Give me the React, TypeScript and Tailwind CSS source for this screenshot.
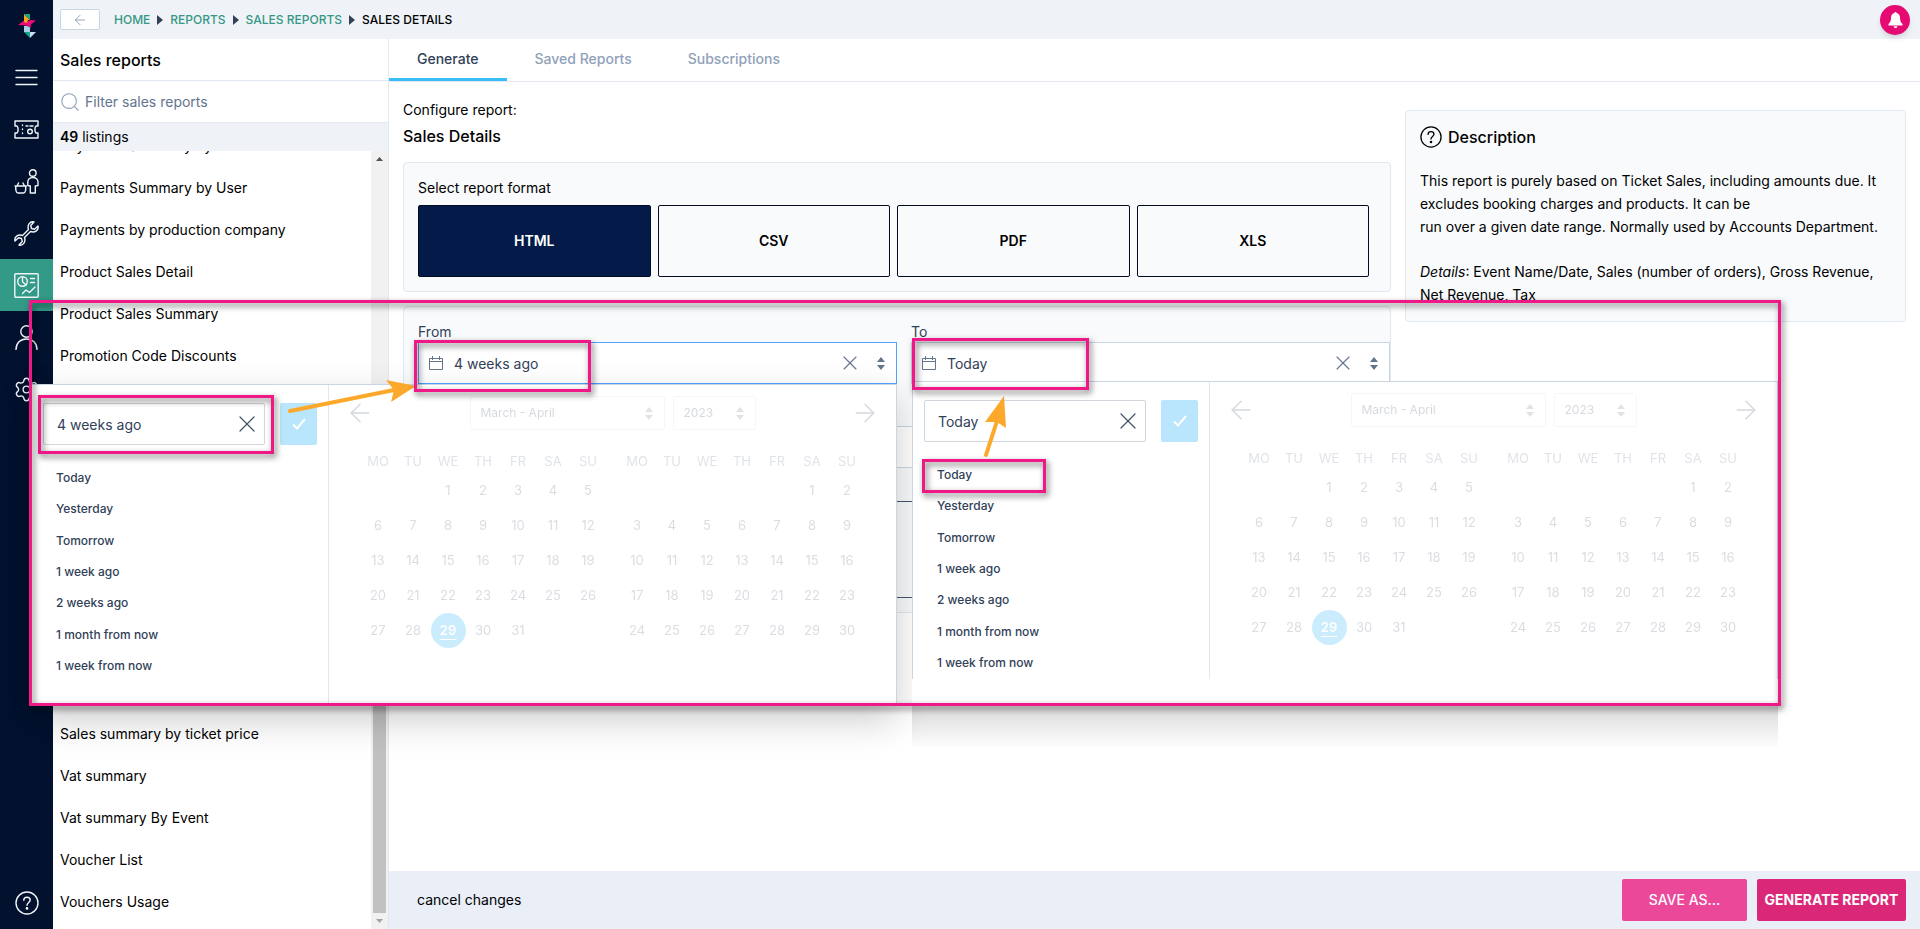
import React, { useState } from 'react';
import { ArrowLeft, ArrowRight, Search, Settings, X } from 'lucide-react';

const topReports = [
  'Payments Summary by Date',
  'Payments Summary by User',
  'Payments by production company',
  'Product Sales Detail',
  'Product Sales Summary',
  'Promotion Code Discounts',
];

const bottomReports = [
  'Sales summary by ticket price',
  'Vat summary',
  'Vat summary By Event',
  'Voucher List',
  'Vouchers Usage',
];

const formats = ['HTML', 'CSV', 'PDF', 'XLS'];
const presets = ['Today', 'Yesterday', 'Tomorrow', '1 week ago', '2 weeks ago', '1 month from now', '1 week from now'];
const weekDays = ['MO', 'TU', 'WE', 'TH', 'FR', 'SA', 'SU'];

// Splits a month into weeks, padding the first one with empty cells
const buildWeeks = (offset: number, length: number) => {
  const cells: (number | null)[] = [
    ...Array(offset).fill(null),
    ...Array.from({ length }, (_, i) => i + 1),
  ];
  while (cells.length % 7) cells.push(null);
  return Array.from({ length: cells.length / 7 }, (_, i) => cells.slice(i * 7, i * 7 + 7));
};

const Logo = () => (
  <svg width="18" height="24" viewBox="0 0 18 24" aria-hidden="true">
    <path d="M6 0v6h6z" fill="#f9a51a" />
    <path d="M6 0h6v6z" fill="#1aa58a" />
    <path d="M12 6l6 .5-5 4-.5 3.500-4.500-2.500-8-.5 6-4.500 3 1.500z" fill="#ec0a7b" />
    <path d="M6 6h4l-1 3-3-1z" fill="#f9a51a" />
    <path d="M6 12l3 0 3 1.500v4.500H6z" fill="#a9cfe6" />
    <path d="M6 18h6v6z" fill="#1aa58a" />
    <path d="M12 18h6l-6 6z" fill="#c4dfee" />
  </svg>
);

const RailIcon: React.FC<{ children: React.ReactNode }> = ({ children }) => (
  <svg width="25" height="25" viewBox="0 0 25 25" fill="none" stroke="currentColor" strokeWidth="1.4" strokeLinejoin="round" strokeLinecap="round" aria-hidden="true">
    {children}
  </svg>
);

const HelpIcon: React.FC<{ size: number }> = ({ size }) => (
  <svg width={size} height={size} viewBox="0 0 24 24" fill="none" stroke="currentColor" strokeWidth="1.4" strokeLinecap="round" aria-hidden="true">
    <circle cx="12" cy="12" r="11" />
    <path d="M8.800 9.200C8.800 7.300 10.200 6.200 12 6.200s3.200 1.100 3.200 2.900c0 2.200-3.200 2.600-3.200 5.200" />
    <circle cx="12" cy="17.400" r=".7" fill="currentColor" />
  </svg>
);

const CalendarIcon = () => (
  <svg width="14" height="14" viewBox="0 0 14 14" fill="none" stroke="#64748b" aria-hidden="true">
    <path d="M.5 2.500h13v11H.5zM.5 5.500h13M3.500 0v4M10.500 0v4" />
  </svg>
);

const SortIcon = () => (
  <svg width="8" height="13" viewBox="0 0 8 13" fill="#64748b" aria-hidden="true">
    <path d="M4 0l4 5H0zM4 13l4-5H0z" />
  </svg>
);

const Separator = () => (
  <svg width="6" height="10" viewBox="0 0 6 10" aria-hidden="true">
    <path d="M0 0l6 5-6 5z" fill="#334155" />
  </svg>
);

const navItems = [
  {
    label: 'Menu',
    icon: <path d="M2 5.500h21M2 12.500h21M2 19.500h21" />,
  },
  {
    label: 'Tickets',
    icon: (
      <>
        <path d="M1 4h23v5h-2c-1.500 1.500-1.500 5.500 0 7h2v5H1v-5h2c1.500-1.500 1.500-5.500 0-7H1z" />
        <path d="M8.500 8v.5M8.500 12v.5M8.500 16v.5M12 9h2M16 9h3" />
        <circle cx="16" cy="14.500" r="2.300" />
      </>
    ),
  },
  {
    label: 'Box office',
    icon: (
      <>
        <circle cx="18.800" cy="4" r="3.300" />
        <path d="M16.300 24v-7l-2.500-.5v-3.500c0-2.500 2-4.500 5-4.500s5.200 2 5.200 4.500v3.500l-2.700.5v7z" />
        <path d="M1 17h11.500M2 17c-.8 3 0 7 2 7h5.500c2 0 2.800-4 2-7M4.500 14L3 17M9 14l1.500 3" />
      </>
    ),
  },
  {
    label: 'Setup',
    icon: <path d="M24 5L20.500 8.300 17.500 7.500 16.700 4.500 20 1C16 0 13 4 14.500 8.500L8.500 14.500C4 13 0 16 1 20L4.500 16.700 7.500 17.500 8.300 20.500 5 24C9 25 12 21 10.500 16.500L16.500 10.500C21 12 25 9 24 5Z" />,
  },
  {
    label: 'Reports',
    active: true,
    icon: (
      <>
        <rect x=".8" y=".8" width="23.400" height="23.400" rx="1" />
        <circle cx="8.500" cy="8.500" r="4.800" />
        <path d="M8.500 3.700v5l3.500 3.300M16.500 5.500h4M16.500 9.500h4M8.500 20.500l3.500-3.500 3.500 2.500 5.500-5.500" />
      </>
    ),
  },
  {
    label: 'Customers',
    icon: (
      <>
        <circle cx="12.500" cy="6.500" r="5.700" />
        <path d="M2 24.500c0-6.500 4.500-10.500 10.500-10.500S23 18 23 24.500" />
      </>
    ),
  },
];

const ReportItem: React.FC<{ name: string }> = ({ name }) => (
  <li className="flex h-[42px] shrink-0 items-center">
    <a href="#">{name}</a>
  </li>
);

const MonthTable: React.FC<{ label: string; offset: number; length: number; selected?: number }> = ({ label, offset, length, selected }) => (
  <table aria-label={label} className="table-fixed border-collapse text-center text-[13px]">
    <thead>
      <tr className="h-6 text-slate-500">
        {weekDays.map((d) => (
          <th key={d} className="w-[35px] p-0 font-normal">{d}</th>
        ))}
      </tr>
    </thead>
    <tbody>
      {buildWeeks(offset, length).map((week, i) => (
        <tr key={i} className="h-[35px]">
          {week.map((day, j) => (
            <td key={j} className="p-0">
              {day && (
                <button
                  type="button"
                  className={
                    day === selected
                      ? 'h-[35px] w-[35px] rounded-full bg-sky-500 font-semibold text-white underline underline-offset-4'
                      : 'h-[35px] w-[35px] text-slate-600'
                  }
                >
                  {day}
                </button>
              )}
            </td>
          ))}
        </tr>
      ))}
    </tbody>
  </table>
);

const CalendarSelect: React.FC<{ label: string; value: string; className: string }> = ({ label, value, className }) => (
  <div className={`relative h-[34px] ${className}`}>
    <select aria-label={label} className="h-full w-full appearance-none rounded-xs border border-slate-300 px-2.5 text-xs text-slate-700">
      <option>{value}</option>
    </select>
    <span className="pointer-events-none absolute inset-y-0 right-3 flex items-center">
      <SortIcon />
    </span>
  </div>
);

const DatePopover: React.FC<{ value: string; onChange: (value: string) => void; label: string }> = ({ value, onChange, label }) => (
  <div className="flex h-full">
    <div className="w-[297px] border-r border-slate-200 pt-[18px] pl-[11px]">
      <div className="flex gap-[15px]">
        <div className="relative h-[42px] w-[222px]">
          <input
            type="text"
            aria-label={label}
            value={value}
            onChange={(e) => onChange(e.target.value)}
            className="h-full w-full rounded-xs border border-gray-300 bg-white pr-10 pl-[13px] text-sm text-slate-700"
          />
          <button type="button" aria-label="Clear date" className="absolute inset-y-0 right-1 text-slate-600">
            <X size={28} strokeWidth={1.1} />
          </button>
        </div>
        <button type="button" aria-label="Apply date" className="flex h-[42px] w-[37px] items-center justify-center rounded-xs bg-[#bae6fd] text-white">
          <svg width="14" height="12" viewBox="0 0 14 12" fill="none" stroke="currentColor" strokeWidth="2" aria-hidden="true">
            <path d="M1 6.500l4 4L13 1" />
          </svg>
        </button>
      </div>
      <ul className="mt-[17px] grid h-[220px] auto-rows-fr pl-[13px]">
        {presets.map((p) => (
          <li key={p} className="flex items-center">
            <button type="button" onClick={() => onChange(p)} className="text-xs font-medium text-slate-700">{p}</button>
          </li>
        ))}
      </ul>
    </div>
    <div className="flex flex-1 flex-col items-center pt-[11px] opacity-20">
      <div className="flex w-full items-center justify-between px-4">
        <button type="button" aria-label="Previous month" className="text-slate-700">
          <ArrowLeft size={30} strokeWidth={1.2} />
        </button>
        <div className="flex flex-1 justify-center gap-2">
          <CalendarSelect label="Month" value="March - April" className="w-[195px]" />
          <CalendarSelect label="Year" value="2023" className="w-[83px]" />
        </div>
        <button type="button" aria-label="Next month" className="text-slate-700">
          <ArrowRight size={30} strokeWidth={1.2} />
        </button>
      </div>
      <div className="mt-[19px] flex items-start gap-3.5">
        <MonthTable label="March 2023" offset={2} length={31} selected={29} />
        <MonthTable label="April 2023" offset={5} length={30} />
      </div>
    </div>
  </div>
);

const DateField: React.FC<{ id: string; label: string; value: string; onChange: (value: string) => void; focused?: boolean; children: React.ReactNode }> = ({ id, label, value, onChange, focused, children }) => (
  <div className="flex-1">
    <label htmlFor={id} className="block text-sm text-slate-700">{label}</label>
    <div className="relative h-[42px]">
      <span className="pointer-events-none absolute inset-y-0 left-[11px] flex items-center">
        <CalendarIcon />
      </span>
      <input
        id={id}
        type="text"
        value={value}
        onChange={(e) => onChange(e.target.value)}
        className={`h-full w-full border bg-white pr-20 pl-[35px] text-sm text-slate-700 outline-none ${focused ? 'border-blue-400' : 'border-slate-300'}`}
      />
      <span className="absolute inset-y-0 right-3 flex items-center gap-[15px]">
        <button type="button" aria-label={`Clear ${label}`} className="text-slate-500">
          <X size={24} strokeWidth={1.1} />
        </button>
        <SortIcon />
      </span>
      {children}
    </div>
  </div>
);

// Pink outline drawn over the page to point at an area
const Highlight: React.FC<{ className: string }> = ({ className }) => (
  <div className={`pointer-events-none absolute z-20 border-3 border-[#f01887] drop-shadow-[2px_3px_3px_rgba(0,0,0,0.6)] ${className}`} />
);

const App: React.FC = () => {
  const [format, setFormat] = useState('HTML');
  const [from, setFrom] = useState('4 weeks ago');
  const [to, setTo] = useState('Today');

  return (
    <div className="relative flex h-screen overflow-hidden bg-white font-[Inter,sans-serif] text-sm text-black">
      {/* Icon rail */}
      <nav aria-label="Main" className="flex w-[53px] shrink-0 flex-col bg-[#01112e] text-slate-100">
        <a href="#" aria-label="Home" className="flex h-[51px] items-center justify-center">
          <Logo />
        </a>
        {navItems.map((item) => (
          <a
            key={item.label}
            href="#"
            aria-label={item.label}
            className={`flex h-[52px] items-center justify-center ${item.active ? 'bg-[#329a87]' : ''}`}
          >
            <RailIcon>{item.icon}</RailIcon>
          </a>
        ))}
        <a href="#" aria-label="Settings" className="flex h-[52px] items-center justify-center">
          <Settings size={27} strokeWidth={1.2} />
        </a>
        <a href="#" aria-label="Help" className="mt-auto flex h-[53px] items-center justify-center">
          <HelpIcon size={24} />
        </a>
      </nav>

      <div className="flex min-w-0 flex-1 flex-col">
        {/* Top bar */}
        <header className="flex h-[39px] shrink-0 items-center bg-[#eff3f8] pr-2.5 pl-[7px]">
          <button type="button" aria-label="Back" className="flex h-[21px] w-10 items-center justify-center rounded-xs border border-slate-300 bg-white text-slate-400">
            <ArrowLeft size={16} strokeWidth={1.4} />
          </button>
          <nav aria-label="Breadcrumb" className="ml-3.5 flex items-center gap-[7px] text-xs font-medium text-[#359784]">
            <a href="#">HOME</a>
            <Separator />
            <a href="#">REPORTS</a>
            <Separator />
            <a href="#">SALES REPORTS</a>
            <Separator />
            <span className="text-black">SALES DETAILS</span>
          </nav>
          <button type="button" aria-label="Notifications" className="ml-auto flex h-[30px] w-[30px] items-center justify-center rounded-full bg-[#e60a73] shadow-md">
            <svg width="15" height="16" viewBox="0 0 15 16" fill="#fff" aria-hidden="true">
              <path d="M7.500 0c.6 0 1 .4 1 1 2.300.5 3.500 2.300 3.500 4.700 0 3 .8 4.800 2.500 6.300v1.500H.5V12C2.200 10.500 3 8.700 3 5.700 3 3.300 4.200 1.500 6.500 1c0-.6.4-1 1-1zM5.700 14.200h3.600c0 1-.8 1.800-1.800 1.800s-1.800-.8-1.800-1.800z" />
            </svg>
          </button>
        </header>

        <div className="flex min-h-0 flex-1">
          {/* Report list */}
          <aside className="flex w-[336px] shrink-0 flex-col border-r border-slate-200">
            <h2 className="flex h-[42px] shrink-0 items-center border-b border-slate-200 px-[7px] text-base font-medium">Sales reports</h2>
            <label className="flex h-[42px] shrink-0 items-center gap-1 border-b border-slate-200 px-1.5 text-slate-400">
              <Search size={22} strokeWidth={1.2} />
              <input type="search" placeholder="Filter sales reports" className="flex-1 text-sm outline-none placeholder:text-slate-500" />
            </label>
            <p className="flex h-7 shrink-0 items-center bg-[#eff3f8] px-[7px] whitespace-pre"><b className="font-semibold">49</b> listings</p>
            <div className="flex min-h-0 flex-1">
              <ul className="flex flex-1 flex-col justify-end overflow-hidden px-[7px] pb-1.5">
                {topReports.map((r) => (
                  <ReportItem key={r} name={r} />
                ))}
                {/* rows covered by the date popover */}
                <li aria-hidden="true" className="h-[336px] shrink-0" />
                {bottomReports.map((r) => (
                  <ReportItem key={r} name={r} />
                ))}
              </ul>
              <div className="flex w-[17px] flex-col items-center justify-between bg-[#f1f1f1] py-1.5">
                <svg width="7" height="4" viewBox="0 0 7 4" aria-hidden="true"><path d="M3.500 0L7 4H0z" fill="#505050" /></svg>
                <div className="mt-auto mb-1.5 h-1/2 w-[13px] bg-[#c1c1c1]" />
                <svg width="7" height="4" viewBox="0 0 7 4" aria-hidden="true"><path d="M3.500 4L7 0H0z" fill="#a3a3a3" /></svg>
              </div>
            </div>
          </aside>

          {/* Report configuration */}
          <main className="flex min-w-0 flex-1 flex-col">
            <div role="tablist" className="flex h-[43px] shrink-0 border-b border-slate-200 font-medium text-slate-400">
              <button type="button" role="tab" className="border-b-3 border-[#38bdf8] px-7 text-slate-700">Generate</button>
              <button type="button" role="tab" className="border-b-3 border-transparent px-7">Saved Reports</button>
              <button type="button" role="tab" className="border-b-3 border-transparent px-7">Subscriptions</button>
            </div>

            <div className="flex flex-1 items-start gap-3.5 pr-3.5 pl-3.5">
              <div className="min-w-0 flex-1 pt-[18px]">
                <p>Configure report:</p>
                <h1 className="mt-1.5 text-base leading-5 font-medium">Sales Details</h1>

                <fieldset className="mt-4 rounded-sm border border-slate-200 bg-slate-50 pt-[15px] pr-[21px] pb-3.5 pl-3.5">
                  <p>Select report format</p>
                  <div className="mt-[7px] grid grid-cols-4 gap-[7px]">
                    {formats.map((f) => (
                      <button
                        key={f}
                        type="button"
                        onClick={() => setFormat(f)}
                        className={`h-[72px] rounded-xs border border-[#020c20] font-semibold ${format === f ? 'bg-[#041b49] text-white' : ''}`}
                      >
                        {f}
                      </button>
                    ))}
                  </div>
                </fieldset>

                <section className="mt-3.5 rounded-sm border border-slate-200 bg-slate-50 pt-[15px] pb-3.5 pl-3.5">
                  <div className="flex gap-3.5">
                    <DateField id="from" label="From" value={from} onChange={setFrom} focused>
                      <div className="absolute top-full right-0 z-10 h-[321px] w-[866px] border-x border-t border-slate-300 bg-white shadow-[0_15px_35px_rgba(0,0,0,0.2)]">
                        <DatePopover label="From date" value={from} onChange={setFrom} />
                        <Highlight className="top-2.5 left-1.5 h-[59px] w-[236px]" />
                        <svg width="140" height="40" viewBox="0 0 140 40" className="pointer-events-none absolute -top-2 left-[250px] z-30" aria-hidden="true">
                          <path d="M8 34L112 13" stroke="#fca82b" strokeWidth="4" strokeLinecap="round" />
                          <path d="M134 9L104 3L112 13L109 25Z" fill="#fca82b" />
                        </svg>
                      </div>
                      <Highlight className="-top-0.5 -left-1 h-[52px] w-[177px]" />
                    </DateField>
                    <DateField id="to" label="To" value={to} onChange={setTo}>
                      <div className="absolute top-[39px] left-px z-10 h-[324px] w-[866px] border-t border-slate-300 bg-white">
                        <div className="h-[297px] border-x border-slate-300">
                          <DatePopover label="To date" value={to} onChange={setTo} />
                        </div>
                        <div className="absolute inset-x-0 top-full h-11 bg-linear-to-b from-black/15 to-transparent" />
                        <Highlight className="top-[77px] left-2.5 h-[34px] w-[124px]" />
                        <svg width="32" height="66" viewBox="0 0 32 66" className="pointer-events-none absolute top-3 left-[67px] z-30" aria-hidden="true">
                          <path d="M7 61L18 27" stroke="#fca82b" strokeWidth="4" strokeLinecap="round" />
                          <path d="M25 2L6 28L18 28L27 34Z" fill="#fca82b" />
                        </svg>
                      </div>
                      <Highlight className="-top-1 left-px h-[52px] w-[177px]" />
                    </DateField>
                  </div>
                  <select aria-label="Grouping" className="mt-[42px] block h-[42px] w-full appearance-none border border-slate-300 bg-white" />
                  <textarea aria-label="Notes" className="mt-[33px] block h-[97px] w-full resize-none border border-slate-600" />
                </section>
              </div>

              <section className="mt-7 w-[501px] shrink-0 rounded-sm border border-slate-200 bg-slate-50 px-3.5 pt-3.5 pb-[15px]">
                <h2 className="flex items-center gap-1.5 text-base leading-6 font-medium">
                  <HelpIcon size={22} />
                  Description
                </h2>
                <p className="mt-5 leading-[23px]">
                  This report is purely based on Ticket Sales, including amounts due. It excludes booking charges and products. It can be
                  <br />
                  run over a given date range. Normally used by Accounts Department.
                </p>
                <p className="mt-[22px] leading-[23px]">
                  <i>Details</i>: Event Name/Date, Sales (number of orders), Gross Revenue, Net Revenue, Tax
                </p>
              </section>
            </div>

            <footer className="flex h-[58px] shrink-0 items-center gap-2.5 bg-[#e9eef7] pr-3.5 pl-7">
              <button type="button" className="mr-auto">cancel changes</button>
              <button type="button" className="h-[42px] w-[125px] rounded-xs bg-[#ec4899] font-medium text-white">SAVE AS...</button>
              <button type="button" className="h-[42px] w-[149px] rounded-xs bg-[#db2777] font-bold whitespace-nowrap text-white">GENERATE REPORT</button>
            </footer>
          </main>
        </div>
      </div>

      <Highlight className="top-[300px] right-[139px] left-[29px] h-[406px]" />
    </div>
  );
};

export default App;
